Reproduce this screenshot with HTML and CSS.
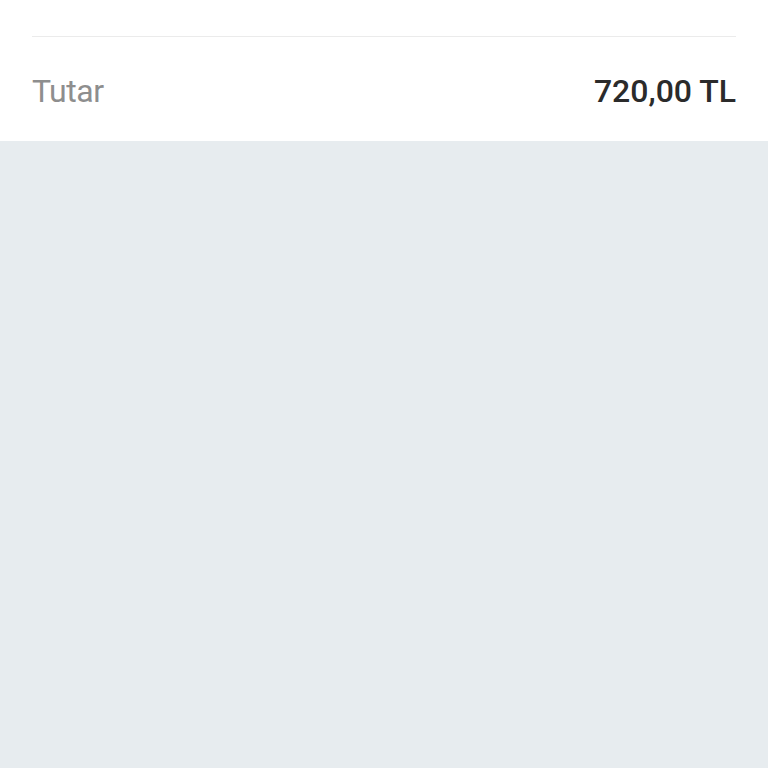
FILE: index.html
```html
<!DOCTYPE html>
<html lang="tr">
<head>
    <meta charset="UTF-8">
    <meta name="viewport" content="width=device-width, initial-scale=1.0">
    <title>Tutar</title>
    <link rel="stylesheet" href="styles.css">
</head>
<body>
    <div class="summary">
        <div class="summary-row">
            <span class="label">Tutar</span>
            <span class="amount">720,00 TL</span>
        </div>
    </div>
</body>
</html>
```

FILE: styles.css
```css
html, body {
    height: 100%;
}
body {
    margin: 0;
    font-family: Roboto, Arial, sans-serif;
    background-color: #e7ecef;
}
.summary {
    background-color: #fff;
    padding: 36px 32px 0;
}
.summary-row {
    display: flex;
    justify-content: space-between;
    align-items: center;
    box-sizing: border-box;
    height: 105px;
    padding-top: 3px;
    border-top: 1px solid #ebebeb;
}
.label {
    color: #8e8e8e;
    font-size: 32px;
    letter-spacing: -0.5px;
}
.amount {
    color: #2b2b2b;
    font-size: 32px;
    font-weight: 500;
}
```
